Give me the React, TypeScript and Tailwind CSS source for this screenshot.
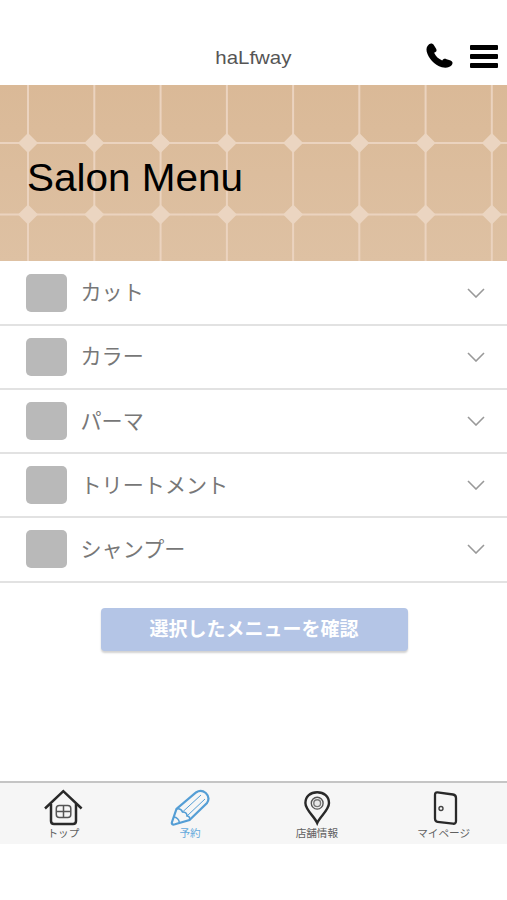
import type { ReactNode } from "react"

const menus = ["カット", "カラー", "パーマ", "トリートメント", "シャンプー"]

const columns = [28, 94.3, 160.6, 226.9, 293.1, 359.3, 425.6, 491.8]
const rows = [58, 129.5]

function PhoneIcon() {
  return (
    <svg viewBox="0 0 86 80" className="h-[27px] w-[29px]" fill="#000">
      <path d="M12 7C17 3 23 4 26 9L33 20C36 26 34 29 27 32C32 43 40 50 51 55C54 50 58 48 64 51L76 55C83 58 83 64 79 69C73 76 62 78 50 75C27 68 10 48 5 28C3 19 6 12 12 7Z" />
    </svg>
  )
}

function Header() {
  return (
    <header className="relative flex h-[85px] items-center justify-center pt-[32px]">
      <h1 className="scale-x-[1.075] text-[19px] text-[#555]">haLfway</h1>
      <div className="absolute top-[42px] right-[9px] flex items-center gap-[16px]">
        <PhoneIcon />
        <div className="mt-[2px] flex w-[28px] flex-col gap-[4px]">
          <span className="h-[5px] rounded-[1px] bg-black" />
          <span className="h-[5px] rounded-[1px] bg-black" />
          <span className="h-[5px] rounded-[1px] bg-black" />
        </div>
      </div>
    </header>
  )
}

function Hero() {
  return (
    <section className="relative flex h-[176px] items-center bg-linear-to-b from-[#dab997] to-[#dec1a3]">
      <svg
        viewBox="0 0 507 176"
        className="absolute inset-0 h-full w-full"
        stroke="#ebd3bf"
        strokeWidth="2"
      >
        {columns.map((x) => (
          <path key={x} d={`M${x} 0V176`} />
        ))}
        {rows.map((y) => (
          <path key={y} d={`M0 ${y}H507`} />
        ))}
        {rows.map((y) =>
          columns.map((x) => (
            <path
              key={`${x}-${y}`}
              d={`M${x} ${y - 10}l10 10l-10 10l-10 -10z`}
              fill="#ebd5c1"
              stroke="none"
            />
          ))
        )}
      </svg>
      <h2 className="relative ml-[27px] origin-left scale-x-[1.065] pt-[9px] text-[38px] leading-none text-black">
        Salon Menu
      </h2>
    </section>
  )
}

function MenuRow({ label }: { label: string }) {
  return (
    <li className="flex h-[64.2px] items-center border-b-2 border-[#e2e2e2] pr-[22px] pl-[26px]">
      <span className="h-[38px] w-[41px] rounded-[5px] bg-[#b9b9b9]" />
      <span className="ml-[13.5px] flex-1 text-[21.1px] leading-none text-[#777]">{label}</span>
      <svg viewBox="0 0 18 10" className="h-[10px] w-[18px]" fill="none" stroke="#999" strokeWidth="1.6">
        <path d="M1 1L9 9L17 1" />
      </svg>
    </li>
  )
}

function HomeIcon() {
  return (
    <svg viewBox="0 0 40 38" className="h-[38px] w-[40px]" fill="none" stroke="#292929" strokeWidth="2.5">
      <path d="M2 20.5L20.3 3.2L38.6 20.5" />
      <path d="M8 16V33Q8 36 11 36H30Q33 36 33 33V16" />
      <g stroke="#555" strokeWidth="1.5">
        <rect x="13.3" y="17.5" width="14.5" height="12" rx="3" />
        <path d="M20.5 17.5V29.5M13.3 23.5H27.8" />
      </g>
    </svg>
  )
}

function PencilIcon() {
  return (
    <svg viewBox="0 0 40 38" className="h-[38px] w-[40px]" fill="none" stroke="#559ed5" strokeWidth="2.2">
      <path d="M2 34L6.5 21L26 4.5Q31 1.2 35.8 5Q40.5 9.5 37 15L19.5 32L5 36.3Q1 37.3 2 34Z" />
      <path d="M6.5 21Q11 20 12.5 24Q17 24 17 28Q20.5 28.5 19.5 32" strokeWidth="1.6" />
      <path d="M3.8 29Q8.5 29.5 9.5 34.8" strokeWidth="1.5" />
      <path d="M12.5 24L31 7M17 28L35 11" strokeWidth="1" />
    </svg>
  )
}

function PinIcon() {
  return (
    <svg viewBox="0 0 40 38" className="h-[38px] w-[40px]" fill="none" stroke="#292929" strokeWidth="2.4">
      <path d="M20.2 35C17.5 28.5 8.4 22 8.4 15C8.4 8.5 13.4 4.2 20.2 4.2C27 4.2 32 8.5 32 15C32 22 23 28.5 20.2 35Z" />
      <circle cx="20.2" cy="15.2" r="5.9" stroke="#555" strokeWidth="1.4" />
      <circle cx="20.2" cy="15.2" r="3.4" fill="#e8e8e8" stroke="#777" strokeWidth="1.4" />
    </svg>
  )
}

function DoorIcon() {
  return (
    <svg viewBox="0 0 40 38" className="h-[38px] w-[40px]" fill="none" stroke="#292929" strokeWidth="2.3">
      <path d="M13.5 4.4L29 6.5Q32 7 32 10V33Q32 36 29 35.7L13.5 33.8Q11 33.5 11 30.5V6.9Q11 4.1 13.5 4.4Z" />
      <circle cx="17" cy="20.5" r="2" stroke="#444" strokeWidth="1.4" />
    </svg>
  )
}

function NavItem({ icon, label, active }: { icon: ReactNode; label: string; active?: boolean }) {
  return (
    <a className="flex flex-1 flex-col items-center pt-[5px]">
      {icon}
      <span
        className={`mt-[2px] text-[10.6px] leading-[11px] ${active ? "text-[#65aadd]" : "text-[#606060]"}`}
      >
        {label}
      </span>
    </a>
  )
}

export default function App() {
  return (
    <div className="flex h-[900px] w-[507px] flex-col bg-white font-['Liberation_Sans','Noto_Sans_CJK_JP',sans-serif]">
      <Header />
      <Hero />
      <ul className="flex flex-col pt-[0.6px]">
        {menus.map((label) => (
          <MenuRow key={label} label={label} />
        ))}
      </ul>
      <button className="mt-[25.4px] ml-[100.5px] h-[43px] w-[307px] rounded-[4px] bg-[#b4c5e6] text-[19px] leading-none font-bold text-white shadow-[0_2px_2px_rgba(0,0,0,0.18)]">
        選択したメニューを確認
      </button>
      <nav className="mt-auto mb-[56px] flex h-[63px] border-t-2 border-[#c5c5c5] bg-[#f6f6f6]">
        <NavItem icon={<HomeIcon />} label="トップ" />
        <NavItem icon={<PencilIcon />} label="予約" active />
        <NavItem icon={<PinIcon />} label="店舗情報" />
        <NavItem icon={<DoorIcon />} label="マイページ" />
      </nav>
    </div>
  )
}
